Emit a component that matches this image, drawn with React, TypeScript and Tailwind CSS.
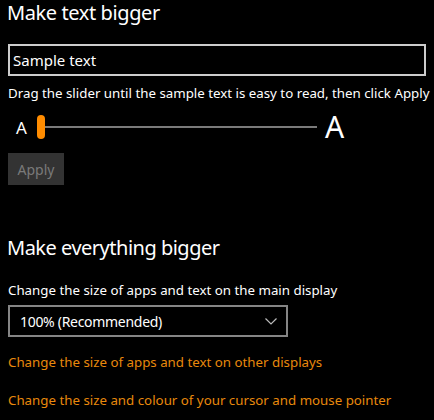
import React from "react";

export default function App() {
  const font = { fontFamily: '"Noto Sans", "Open Sans", sans-serif' };
  return (
    <div className="w-[434px] h-[420px] bg-black text-white overflow-hidden" style={font}>
      <div className="px-2">
        <h1 className="text-[20px] leading-[26px] text-white font-normal -ml-[1px] tracking-[-0.4px] whitespace-nowrap">Make text bigger</h1>
        <div className="mt-[18px] h-[32px] w-[418px] border-2 border-[#cccccc] flex items-center pl-[3px] text-[15px] text-white">
          Sample text
        </div>
        <p className="mt-[8px] text-[13.3px] leading-[18px] text-white whitespace-nowrap">
          Drag the slider until the sample text is easy to read, then click Apply
        </p>
        <div className="mt-[12px] h-[26px] flex items-center">
          <span className="ml-[8px] text-[17px] leading-none w-[13px]">A</span>
          <div className="ml-[8px] flex items-center">
            <div className="w-[8px] h-[24px] rounded-full bg-[#ff8c00]" />
            <div className="w-[272px] h-[2px] bg-[#7a7a7a]" />
          </div>
          <span className="ml-[8px] text-[30px] leading-none">A</span>
        </div>
        <button className="mt-[13px] h-[32px] w-[56px] bg-[#333333] text-[#7a7a7a] text-[14px] flex items-center justify-center">
          Apply
        </button>
        <h2 className="mt-[50px] text-[20px] leading-[26px] font-normal -ml-[1px] tracking-[-0.5px] whitespace-nowrap">Make everything bigger</h2>
        <p className="mt-[20px] text-[13.3px] leading-[18px] whitespace-nowrap">Change the size of apps and text on the main display</p>
        <div className="mt-[6px] h-[32px] w-[280px] border-2 border-[#858585] flex items-center justify-between pl-[10px] pr-[9px] text-[14px] tracking-[-0.3px]">
          <span>100% (Recommended)</span>
          <svg width="12" height="7" viewBox="0 0 12 7" fill="none">
            <path d="M0.5 0.5 L6 6 L11.5 0.5" stroke="#bbbbbb" strokeWidth="1.2" />
          </svg>
        </div>
        <p className="mt-[16px] text-[13.3px] leading-[18px] text-[#e8890c] whitespace-nowrap">Change the size of apps and text on other displays</p>
        <p className="mt-[20px] text-[13.3px] leading-[18px] text-[#e8890c] whitespace-nowrap">Change the size and colour of your cursor and mouse pointer</p>
      </div>
    </div>
  );
}
